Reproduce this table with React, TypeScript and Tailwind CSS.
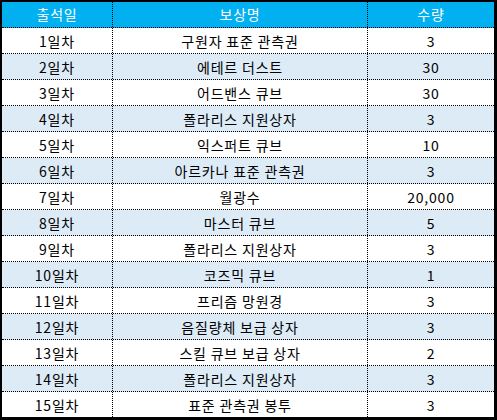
const rewards = [
  ["1일차", "구원자 표준 관측권", "3"],
  ["2일차", "에테르 더스트", "30"],
  ["3일차", "어드밴스 큐브", "30"],
  ["4일차", "폴라리스 지원상자", "3"],
  ["5일차", "익스퍼트 큐브", "10"],
  ["6일차", "아르카나 표준 관측권", "3"],
  ["7일차", "월광수", "20,000"],
  ["8일차", "마스터 큐브", "5"],
  ["9일차", "폴라리스 지원상자", "3"],
  ["10일차", "코즈믹 큐브", "1"],
  ["11일차", "프리즘 망원경", "3"],
  ["12일차", "음질량체 보급 상자", "3"],
  ["13일차", "스킬 큐브 보급 상자", "2"],
  ["14일차", "폴라리스 지원상자", "3"],
  ["15일차", "표준 관측권 봉투", "3"],
];

const font = { fontFamily: '"Noto Sans CJK KR", "Noto Sans", sans-serif' };

const App = () => {
  return (
    <div className="w-[497px] h-[420px] bg-white">
      <div
        className="border-black border-l-2 border-t-2 border-r-[3px] border-b-[3px] text-[14px] tracking-[0.8px] text-black"
        style={font}>
        {/* header */}
        <div className="grid grid-cols-[111px_255px_126px] h-[26px] bg-[#00b0f0] text-white border-b border-dotted border-black">
          <div className="flex items-center justify-center border-r border-dotted border-black">출석일</div>
          <div className="flex items-center justify-center border-r border-dotted border-black">보상명</div>
          <div className="flex items-center justify-center">수량</div>
        </div>

        {rewards.map(([day, name, qty], i) => (
          <div
            key={day}
            className={`grid grid-cols-[111px_255px_126px] ${
              i === rewards.length - 1 ? "h-[25px]" : "h-[26px] border-b border-dotted border-black"
            } ${i % 2 === 1 ? "bg-[#ddebf7]" : "bg-white"}`}>
            <div className="flex items-center justify-center border-r border-dotted border-black pt-px">{day}</div>
            <div className="flex items-center justify-center border-r border-dotted border-black pt-px">{name}</div>
            <div className="flex items-center justify-center pt-px">{qty}</div>
          </div>
        ))}
      </div>
    </div>
  );
};

export default App;
